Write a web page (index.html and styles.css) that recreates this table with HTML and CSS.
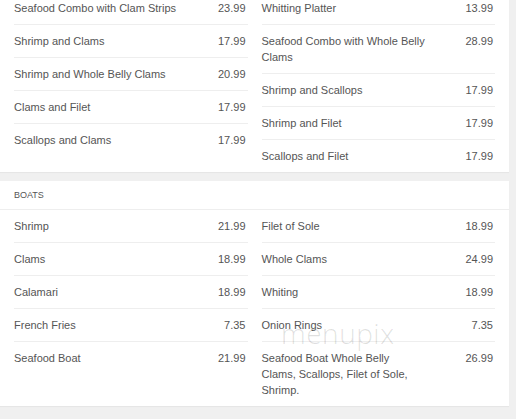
FILE: index.html
```html
<!DOCTYPE html>
<html lang="en">
<head>
    <meta charset="UTF-8">
    <meta name="viewport" content="width=device-width, initial-scale=1.0">
    <title>Menu</title>
    <link rel="stylesheet" href="styles.css">
</head>
<body>
<div class="page">
    <div class="card card-first">
        <div class="columns">
            <div class="col">
                <div class="item"><span class="name">Seafood Combo with Clam Strips</span><span class="price">23.99</span></div>
                <div class="item"><span class="name">Shrimp and Clams</span><span class="price">17.99</span></div>
                <div class="item"><span class="name">Shrimp and Whole Belly Clams</span><span class="price">20.99</span></div>
                <div class="item"><span class="name">Clams and Filet</span><span class="price">17.99</span></div>
                <div class="item"><span class="name">Scallops and Clams</span><span class="price">17.99</span></div>
            </div>
            <div class="col">
                <div class="item"><span class="name">Whitting Platter</span><span class="price">13.99</span></div>
                <div class="item"><span class="name">Seafood Combo with Whole Belly Clams</span><span class="price">28.99</span></div>
                <div class="item"><span class="name">Shrimp and Scallops</span><span class="price">17.99</span></div>
                <div class="item"><span class="name">Shrimp and Filet</span><span class="price">17.99</span></div>
                <div class="item"><span class="name">Scallops and Filet</span><span class="price">17.99</span></div>
            </div>
        </div>
    </div>

    <div class="card">
        <div class="card-title">BOATS</div>
        <div class="columns">
            <div class="col">
                <div class="item"><span class="name">Shrimp</span><span class="price">21.99</span></div>
                <div class="item"><span class="name">Clams</span><span class="price">18.99</span></div>
                <div class="item"><span class="name">Calamari</span><span class="price">18.99</span></div>
                <div class="item"><span class="name">French Fries</span><span class="price">7.35</span></div>
                <div class="item"><span class="name">Seafood Boat</span><span class="price">21.99</span></div>
            </div>
            <div class="col">
                <div class="item"><span class="name">Filet of Sole</span><span class="price">18.99</span></div>
                <div class="item"><span class="name">Whole Clams</span><span class="price">24.99</span></div>
                <div class="item"><span class="name">Whiting</span><span class="price">18.99</span></div>
                <div class="item"><span class="name">Onion Rings</span><span class="price">7.35</span></div>
                <div class="item"><span class="name">Seafood Boat Whole Belly Clams, Scallops, Filet of Sole, Shrimp.</span><span class="price">26.99</span></div>
            </div>
        </div>
        <span class="watermark">menupix</span>
    </div>
</div>
</body>
</html>
```

FILE: styles.css
```css
body {
    margin: 0;
    background-color: #f0f0f0;
    font-family: "Liberation Sans", Arial, sans-serif;
    color: #555;
    font-size: 11px;
    line-height: 16px;
}
.page {
    width: 509px;
}
.card {
    background-color: #fff;
    margin-bottom: 9px;
    position: relative;
    box-shadow: 0 1px 1px rgba(0,0,0,0.04);
}
.card-first {
    margin-top: -8px;
    margin-bottom: 9px;
}
.card-title {
    font-size: 9px;
    line-height: 13px;
    padding: 8px 14px 7px;
    border-bottom: 1px solid #eee;
}
.columns {
    display: flex;
    gap: 14px;
    padding: 0 14px;
}
.col {
    flex: 1;
}
.item {
    display: flex;
    padding: 8px 0;
    border-bottom: 1px solid #eee;
}
.item:last-child {
    border-bottom: none;
}
.name {
    width: 164px; /* wrap long names like the original menu */
}
.price {
    flex: 1;
    text-align: right;
    padding-right: 2px;
}
.watermark {
    position: absolute;
    left: 281px;
    top: 137px;
    font-family: "Open Sans", sans-serif;
    font-weight: 300;
    font-size: 28px;
    line-height: 30px;
    color: rgba(0,0,0,0.13);
    letter-spacing: 0.5px;
}
```
